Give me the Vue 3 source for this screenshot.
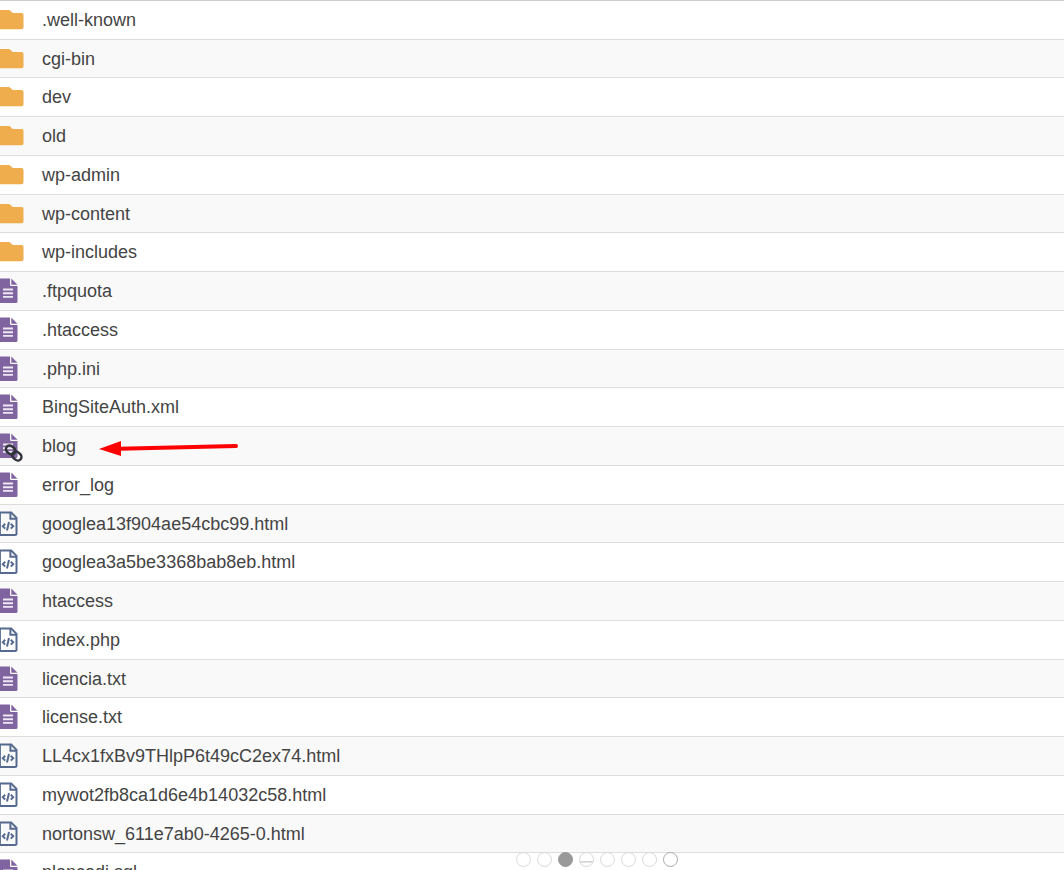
<script setup>
import { ref } from 'vue'

const files = [
    { name: '.well-known', type: 'folder' },
    { name: 'cgi-bin', type: 'folder' },
    { name: 'dev', type: 'folder' },
    { name: 'old', type: 'folder' },
    { name: 'wp-admin', type: 'folder' },
    { name: 'wp-content', type: 'folder' },
    { name: 'wp-includes', type: 'folder' },
    { name: '.ftpquota', type: 'file' },
    { name: '.htaccess', type: 'file' },
    { name: '.php.ini', type: 'file' },
    { name: 'BingSiteAuth.xml', type: 'file' },
    { name: 'blog', type: 'link', marked: true },
    { name: 'error_log', type: 'file' },
    { name: 'googlea13f904ae54cbc99.html', type: 'code' },
    { name: 'googlea3a5be3368bab8eb.html', type: 'code' },
    { name: 'htaccess', type: 'file' },
    { name: 'index.php', type: 'code' },
    { name: 'licencia.txt', type: 'file' },
    { name: 'license.txt', type: 'file' },
    { name: 'LL4cx1fxBv9THlpP6t49cC2ex74.html', type: 'code' },
    { name: 'mywot2fb8ca1d6e4b14032c58.html', type: 'code' },
    { name: 'nortonsw_611e7ab0-4265-0.html', type: 'code' },
    { name: 'plancedi.sql', type: 'file' }
]

// Slider dots
const active = ref(2)
</script>

<template>
    <main class="FileManager">
        <table class="FileList">
            <tbody>
                <tr v-for="file in files" :key="file.name">
                    <td class="icon">
                        <svg v-if="file.type === 'folder'" viewBox="0 0 24 26" aria-hidden="true">
                            <path fill="#f0ad4e" d="M0 3h8.500q1.200 0 2 .8L12.700 6H21.500q2 0 2 2v12.200q0 2-2 2H0z" />
                        </svg>
                        <svg v-else-if="file.type === 'code'" viewBox="0 0 24 26" aria-hidden="true">
                            <g fill="none" stroke="#566a8f" stroke-width="2">
                                <path d="M-1 1.500H11.200L16.500 6.800V22.500q0 1.500-1.500 1.500H-1" />
                                <path d="M10.400 1.500V7.800H16.500" />
                                <path d="M.3 1V25" stroke-width="1.200" />
                                <path d="M5.200 12.800L2.800 15.200L5.200 17.600M10.800 12.800L13.200 15.200L10.800 17.600M9 11L7 19.400" />
                            </g>
                        </svg>
                        <svg v-else viewBox="0 0 24 26" aria-hidden="true">
                            <path fill="#8064a0" d="M0 .6H10V6.800q0 1.200 1.200 1.200H17.500V23.600q0 1.500-1.500 1.500H0z" />
                            <path fill="#8064a0" d="M11.300 .6L17.500 6.800H11.300z" />
                            <path stroke="#eee8f4" stroke-width="1.900" d="M3 11.500H13M3 15.200H13M3 18.900H13" />
                            <g v-if="file.type === 'link'" fill="none" stroke="#30333a" stroke-width="2.400">
                                <rect x="5.600" y="13.300" width="10" height="7.400" rx="3.700" transform="rotate(40 10.600 17)" />
                                <rect x="11.800" y="19.300" width="10" height="7.400" rx="3.700" transform="rotate(40 16.800 23)" />
                            </g>
                        </svg>
                    </td>
                    <td class="name">
                        {{ file.name }}
                        <svg v-if="file.marked" class="arrow" viewBox="0 0 140 18" aria-hidden="true">
                            <path d="M20 8.800L137 6" stroke="#f00" stroke-width="4" stroke-linecap="round" />
                            <path d="M0 9L22 1V16z" fill="#f00" />
                        </svg>
                    </td>
                </tr>
            </tbody>
        </table>

        <nav class="dots" aria-label="Slides">
            <button
                v-for="n in 8"
                :key="n"
                type="button"
                :class="{ active: active === n - 1 }"
                :aria-label="'Slide ' + n"
                @click="active = n - 1"
            ></button>
        </nav>
    </main>
</template>

<style>
body {
    margin: 0;
    background: #fff;
}
</style>

<style scoped>
.FileManager {
    position: relative;
    height: 100vh;
    overflow: hidden;
    font-family: "Liberation Sans", Arial, sans-serif;
    font-size: 18px;
    line-height: 24px;
    color: #444;
}

.FileList {
    width: 100%;
    table-layout: fixed;
    border-collapse: separate;
    border-spacing: 0;
}

.FileList td {
    box-sizing: border-box;
    height: 39px;
    padding: 0;
    border-top: 1px solid #ddd;
    vertical-align: middle;
    white-space: nowrap;
}

.FileList tr:nth-child(4n+2) td {
    height: 38px;
}

.FileList tr:nth-child(even) {
    background: #f9f9f9;
}

.FileList tr:first-child td {
    border-top-color: #ccc;
}

.FileList .icon {
    width: 42px;
}

.icon svg {
    display: block;
    width: 24px;
    height: 26px;
    overflow: visible;
}

.name {
    position: relative;
}

.arrow {
    position: absolute;
    left: 57px;
    top: 13px;
    width: 140px;
    height: 18px;
}

.dots {
    position: absolute;
    left: 516px;
    bottom: 3px;
    display: flex;
    gap: 6px;
}

.dots button {
    box-sizing: border-box;
    width: 15px;
    height: 15px;
    padding: 0;
    border: 1px solid #d8d8d8;
    border-radius: 50%;
    background: #fff;
    cursor: pointer;
}

.dots button:nth-child(4) {
    background: linear-gradient(#fff 60%, #ccc 60%, #eee 80%, #fff 80%);
}

.dots button:last-child {
    border-color: #aaa;
}

.dots button.active {
    border-color: #999;
    background: #999;
}
</style>
